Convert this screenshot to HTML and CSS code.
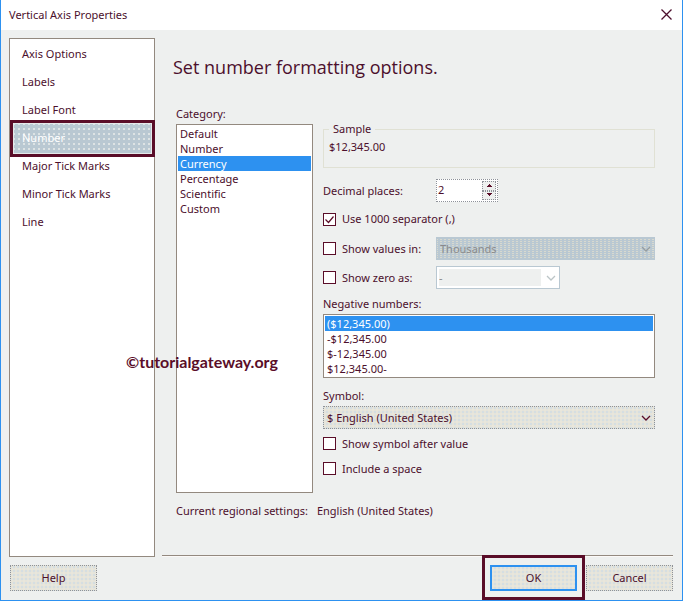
FILE: index.html
```html
<!DOCTYPE html>
<html lang="en">
<head>
<meta charset="utf-8">
<title>Vertical Axis Properties</title>
<link rel="stylesheet" href="styles.css">
</head>
<body>
<div class="dialog">
  <header class="titlebar">
    <h1 class="title">Vertical Axis Properties</h1>
    <button class="close" type="button" aria-label="Close">
      <svg width="11" height="11" viewBox="0 0 11 11"><path d="M0.5 0.5L10.5 10.5M10.5 0.5L0.5 10.5"/></svg>
    </button>
  </header>

  <div class="body">
    <nav class="sidebar">
      <a class="page" href="#">Axis Options</a>
      <a class="page" href="#">Labels</a>
      <a class="page" href="#">Label Font</a>
      <a class="page current" href="#" aria-current="page">Number</a>
      <a class="page" href="#">Major Tick Marks</a>
      <a class="page" href="#">Minor Tick Marks</a>
      <a class="page" href="#">Line</a>
    </nav>

    <main class="panel">
      <h2 class="heading">Set number formatting options.</h2>
      <div class="columns">
        <div class="category">
          <label class="label" for="category">Category:</label>
          <select class="listbox category-list" id="category" size="6">
            <option>Default</option>
            <option>Number</option>
            <option selected>Currency</option>
            <option>Percentage</option>
            <option>Scientific</option>
            <option>Custom</option>
          </select>
        </div>

        <div class="settings">
          <fieldset class="sample">
            <legend>Sample</legend>
            <output class="sample-value">$12,345.00</output>
          </fieldset>

          <div class="row decimals">
            <label for="decimals">Decimal places:</label>
            <div class="spinner">
              <input class="spin-input" id="decimals" type="text" value="2">
              <div class="spin-buttons">
                <button class="spin" type="button" aria-label="Increase"><svg width="7" height="4" viewBox="0 0 7 4"><path d="M3 0h1v1h1v1h1v1H1V2h1V1h1z"/></svg></button>
                <button class="spin" type="button" aria-label="Decrease"><svg width="7" height="4" viewBox="0 0 7 4"><path d="M1 0h5v1H5v1H4v1H3V2H2V1H1z"/></svg></button>
              </div>
            </div>
          </div>

          <div class="row thousands">
            <label class="check"><input type="checkbox" checked>Use 1000 separator (,)</label>
          </div>

          <div class="row scale">
            <label class="check"><input type="checkbox">Show values in:</label>
            <div class="combo muted">
              <select aria-label="Show values in" disabled><option>Thousands</option></select>
              <svg class="arrow" width="10" height="6" viewBox="0 0 10 6"><path d="M1 1l4 4l4-4"/></svg>
            </div>
          </div>

          <div class="row zero">
            <label class="check"><input type="checkbox">Show zero as:</label>
            <div class="combo blank">
              <select aria-label="Show zero as" disabled><option>-</option></select>
              <svg class="arrow" width="10" height="6" viewBox="0 0 10 6"><path d="M1 1l4 4l4-4"/></svg>
            </div>
          </div>

          <label class="label" for="negative">Negative numbers:</label>
          <select class="listbox" id="negative" size="4">
            <option selected>($12,345.00)</option>
            <option>-$12,345.00</option>
            <option>$-12,345.00</option>
            <option>$12,345.00-</option>
          </select>

          <label class="label symbol-label" for="symbol">Symbol:</label>
          <div class="combo">
            <select id="symbol"><option>$ English (United States)</option></select>
            <svg class="arrow" width="10" height="6" viewBox="0 0 10 6"><path d="M1 1l4 4l4-4"/></svg>
          </div>

          <div class="row extra">
            <label class="check"><input type="checkbox">Show symbol after value</label>
          </div>
          <div class="row extra">
            <label class="check"><input type="checkbox">Include a space</label>
          </div>
        </div>
      </div>
      <p class="regional"><span>Current regional settings:</span><span>English (United States)</span></p>
    </main>
  </div>

  <footer class="footer">
    <button class="button" type="button">Help</button>
    <div class="highlight"><button class="button default" type="button">OK</button></div>
    <button class="button" type="button">Cancel</button>
  </footer>
  <div class="watermark">©tutorialgateway.org</div>
</div>
</body>
</html>
```
FILE: styles.css
```css
:root {
  --ink: #4c0f2c;
  --frame: #5a0d28;
  --blue: #2d91f0;
  --face: #eef0ef;
  --edge: #93897f;
  --steel: #b9c8d2;
}

* { box-sizing: border-box; }

body {
  margin: 0;
  background: var(--face);
  color: var(--ink);
  font: 11px/16px "Noto Sans", "Open Sans", sans-serif;
}

button, input, select { font: inherit; color: inherit; margin: 0; }

.dialog {
  position: relative;
  display: flex;
  flex-direction: column;
  min-height: 100vh;
  border: 1px solid var(--blue);
  border-top: 0;
}

.titlebar {
  display: flex;
  align-items: center;
  justify-content: space-between;
  height: 30px;
  padding: 0 10px 0 8px;
  background: #fff;
}

.title { margin: 0; font-size: 11px; font-weight: 400; }

.close { display: flex; padding: 0 0 2px; border: 0; background: none; }
.close svg { fill: none; stroke: var(--ink); stroke-width: 1.3; }

.body {
  flex: 1;
  display: flex;
  gap: 7px;
  padding: 8px 9px 0 8px;
}

.sidebar {
  flex: none;
  width: 146px;
  margin-bottom: -1px;
  padding-top: 1px;
  border: 1px solid var(--edge);
  background: #fff;
}

.page {
  display: block;
  height: 28px;
  padding-left: 12px;
  line-height: 28px;
  color: inherit;
  text-decoration: none;
}

.page.current {
  height: 37px;
  margin: -4px -1px -5px 0;
  padding-left: 9px;
  border: 3px solid var(--frame);
  line-height: 30px;
  color: #fff;
  background: radial-gradient(circle at 1px 1px, #dde3e4 1px, transparent 1px) 0 0 / 5px 5px padding-box, var(--steel);
  box-shadow: inset 0 0 0 1px #e4e9ea;
}

.panel {
  flex: 1;
  display: flex;
  flex-direction: column;
  border-bottom: 1px solid var(--edge);
  box-shadow: 0 1px #fbf9f7;
  padding: 15px 18px 0 11px;
}

.heading { margin: 0 0 24px; font: 400 18px/28px "Open Sans", "Noto Sans", sans-serif; }

.columns { display: flex; gap: 10px; flex: none; padding-left: 3px; }

.category { display: flex; flex-direction: column; flex: none; width: 137px; }
.category-list { flex: 1; }

.label { display: block; height: 19px; line-height: 18px; }

.listbox {
  display: block;
  width: 100%;
  padding: 1px;
  border: 1px solid var(--edge);
  border-radius: 0;
  outline: 0;
  background: #fff;
  overflow: hidden;
}
.listbox option { height: 15px; min-height: 15px; padding: 0 2px; line-height: 15px; }
.listbox option:checked { color: #fff; background: linear-gradient(var(--blue), var(--blue)); }

.settings { flex: 1; min-width: 0; padding: 16px 0 12px; }

.sample {
  height: 47px;
  margin: 0 0 11px;
  padding: 2px 5px 0;
  border: 1px solid #e0e1d4;
}
.sample legend { padding: 0 4px; line-height: 16px; }
.sample-value { display: block; line-height: 16px; }

.row { display: grid; grid-template-columns: 113px 1fr; align-items: center; }
.decimals { height: 23px; margin-bottom: 6px; }
.thousands { height: 22px; margin-bottom: 7px; display: flex; }
.scale { height: 23px; margin-bottom: 6px; }
.zero { height: 23px; margin-bottom: 6px; }
.extra { display: flex; height: 25px; }

.check { display: flex; align-items: center; gap: 6px; white-space: nowrap; }
.check input {
  appearance: none;
  width: 13px;
  height: 13px;
  border: 1px solid var(--frame);
  background: #fff;
}
.check input:checked {
  background: #fff url("data:image/svg+xml,%3Csvg xmlns='http://www.w3.org/2000/svg' viewBox='0 0 11 11'%3E%3Cpath d='M1.5 5.5l3 3l5-6' fill='none' stroke='%235a0d28' stroke-width='1.2'/%3E%3C/svg%3E");
}

.spinner {
  display: flex;
  width: 62px;
  height: 23px;
  padding: 1px;
  border: 1px dotted #8e9299;
  background: #fff;
}
.spin-input { flex: 1; min-width: 0; padding: 0 0 2px; border: 0; outline: 0; background: none; }
.spin-buttons { display: flex; flex-direction: column; width: 14px; }
.spin {
  flex: 1;
  display: flex;
  align-items: center;
  justify-content: center;
  padding: 0;
  border: 1px dotted #8e9299;
  background: var(--face);
}
.spin svg { flex: none; fill: var(--frame); }

.combo { position: relative; height: 23px; }
.combo select {
  appearance: none;
  display: block;
  width: 100%;
  height: 100%;
  padding: 0 20px 0 3px;
  border: 1px dotted #8e9299;
  border-radius: 0;
  opacity: 1;
  background: conic-gradient(#d5dee2 25%, #e5e4da 0 50%, #e8e6dc 0 75%, #e5e4da 0) 0 0 / 4px 4px;
}
.arrow { position: absolute; right: 4px; top: 9px; fill: none; stroke: var(--frame); stroke-width: 1.3; }

.combo.muted select {
  color: #8b8b8b;
  border: 1px solid var(--steel);
  background: conic-gradient(#d8d9cf 0 25%, var(--steel) 25% 100%) 1px 1px / 4px 2px, var(--steel);
}
.muted .arrow { stroke: #969da0; }

.blank { width: 124px; }
.combo.blank select {
  color: #8b8b8b;
  padding: 2px 18px 2px 2px;
  border: 1px solid var(--steel);
  background: linear-gradient(var(--face), var(--face)) content-box, #fff;
}
.blank .arrow { stroke: #bcc5c7; }

.symbol-label { margin-top: 9px; }
.symbol-label + .combo { margin-bottom: 2px; }

.regional { display: flex; gap: 9px; margin: 10px 0 0 3px; }

.footer {
  display: flex;
  align-items: flex-start;
  height: 44px;
  padding: 0 9px;
}

.button {
  width: 87px;
  height: 26px;
  margin-top: 9px;
  padding: 0;
  border: 1px dotted #8e9299;
  background: conic-gradient(#d5dee2 25%, #e5e4da 0 50%, #e8e6dc 0 75%, #e5e4da 0) 0 0 / 4px 4px;
}

.highlight {
  height: 45px;
  margin: -1px 1px 0 auto;
  padding: 7px 5px;
  border: 3px solid var(--frame);
}
.default { margin: 0; border: 2px solid var(--blue); }

.watermark {
  position: absolute;
  left: 125px;
  top: 353px;
  font: 700 16px/18px Lato, sans-serif;
  color: var(--frame);
}
```
